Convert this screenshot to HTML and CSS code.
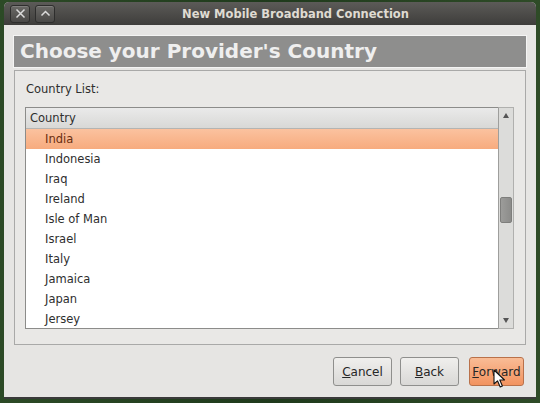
FILE: index.html
```html
<!DOCTYPE html>
<html>
<head>
<meta charset="utf-8">
<link rel="stylesheet" href="styles.css">
</head>
<body>
<div class="window">
  <div class="titlebar">
    <div class="tb-buttons">
      <span class="tb-btn"><svg width="11" height="11" viewBox="0 0 11 11"><path d="M1.5 1.5 L9.5 9.5 M9.5 1.5 L1.5 9.5" stroke="#dcdcdc" stroke-width="1.5" fill="none"/></svg></span>
      <span class="tb-btn"><svg width="11" height="11" viewBox="0 0 11 11"><path d="M1.5 7.5 L5.5 3.5 L9.5 7.5" stroke="#dcdcdc" stroke-width="1.5" fill="none"/></svg></span>
    </div>
    <div class="title">New Mobile Broadband Connection</div>
  </div>
  <div class="content">
    <div class="banner">Choose your Provider's Country</div>
    <div class="panel">
      <div class="label">Country List:</div>
      <div class="listwrap">
        <div class="list">
          <div class="list-head">Country</div>
          <div class="row selected">India</div>
          <div class="row">Indonesia</div>
          <div class="row">Iraq</div>
          <div class="row">Ireland</div>
          <div class="row">Isle of Man</div>
          <div class="row">Israel</div>
          <div class="row">Italy</div>
          <div class="row">Jamaica</div>
          <div class="row">Japan</div>
          <div class="row">Jersey</div>
        </div>
        <div class="scrollbar">
          <span class="arrow up"></span>
          <div class="trough"><div class="thumb"></div></div>
          <span class="arrow down"></span>
        </div>
      </div>
    </div>
    <div class="buttons">
      <button class="btn"><u>C</u>ancel</button>
      <button class="btn"><u>B</u>ack</button>
      <button class="btn primary"><u>F</u>orward</button>
      <svg class="cursor" width="13" height="20" viewBox="0 0 13 20"><path d="M1 1 L1 15 L4.5 11.8 L7.2 18 L9.4 17 L6.8 11 L11.5 11 Z" fill="#fff" stroke="#111" stroke-width="1.1" stroke-linejoin="round"/></svg>
    </div>
  </div>
</div>
</body>
</html>
```
FILE: styles.css
```css
html, body {
  margin: 0;
  padding: 0;
}
body {
  width: 540px;
  height: 403px;
  overflow: hidden;
  background: linear-gradient(90deg, #2c4a26 0%, #1f3a1c 50%, #2e4b27 100%);
  font-family: "DejaVu Sans", sans-serif;
  font-size: 11.5px;
  color: #2e2e2e;
}
.window {
  margin: 2px 0 0 4px;
  width: 532px;
  height: 395px;
  background: #e6e5e3;
  border-radius: 5px 5px 0 0;
  display: flex;
  flex-direction: column;
  border-bottom: 2px solid #3a3a3a;
  overflow: hidden;
}
.titlebar {
  height: 23px;
  flex: none;
  background: linear-gradient(#5c5b58, #3e3d3b);
  display: flex;
  align-items: center;
  position: relative;
}
.tb-buttons {
  display: flex;
  gap: 5px;
  padding-left: 6px;
}
.tb-btn {
  width: 18px;
  height: 16px;
  border: 1px solid #2e2e2d;
  border-radius: 3px;
  background: linear-gradient(#6a6966, #4a4947);
  display: flex;
  align-items: center;
  justify-content: center;
  box-shadow: inset 0 1px 0 rgba(255,255,255,0.15);
}
.title {
  flex: 1;
  text-align: center;
  color: #dfdbd2;
  font-weight: bold;
  font-size: 11.5px;
  padding-left: 0;
}
.content {
  flex: 1;
  display: flex;
  flex-direction: column;
  padding: 10px 9px 0 9px;
}
.banner {
  height: 31px;
  background: #8e8e8d;
  border: 1px solid #f4f4f3;
  color: #efefef;
  font-weight: bold;
  font-size: 20px;
  line-height: 31px;
  padding-left: 6px;
}
.panel {
  margin: 2px 1px 0 1px;
  height: 262px;
  border: 1px solid #a9a9a8;
  background: #e9e8e6;
  padding: 11px 11px 0 10px;
}
.label {
  height: 25px;
  line-height: 14px;
  padding-left: 1px;
}
.listwrap {
  display: flex;
  height: 222px;
}
.list {
  flex: 1;
  border: 1px solid #8c8c8a;
  border-right: none;
  background: #fff;
  overflow: hidden;
}
.list-head {
  height: 20px;
  line-height: 20px;
  padding-left: 4px;
  background: linear-gradient(#eaeaea, #d8d8d6);
  border-bottom: 1px solid #b4b4b2;
}
.row {
  height: 20px;
  line-height: 20px;
  padding-left: 19px;
}
.row.selected {
  background: linear-gradient(#fbc29f, #f7ab7e);
  color: #6a2e10;
}
.scrollbar {
  width: 14px;
  background: #dcdcda;
  border: 1px solid #b0b0ae;
  border-left: 1px solid #9e9e9c;
  display: flex;
  flex-direction: column;
  align-items: center;
}
.arrow {
  width: 0;
  height: 0;
  border-left: 3px solid transparent;
  border-right: 3px solid transparent;
  margin: 5px 0;
}
.arrow.up {
  border-bottom: 5px solid #555;
}
.arrow.down {
  border-top: 5px solid #555;
}
.trough {
  flex: 1;
  width: 100%;
  padding-top: 74px;
}
.thumb {
  height: 26px;
  margin-left: 1px;
  width: 12px;
  background: linear-gradient(90deg, #9c9c9a, #8c8c8a);
  border: 1px solid #7e7e7c;
  border-radius: 2px;
  box-sizing: border-box;
}
.buttons {
  display: flex;
  justify-content: flex-end;
  gap: 8px;
  margin-top: 12px;
  padding-right: 3px;
  position: relative;
}
.btn {
  height: 29px;
  border: 1px solid #8f8f8d;
  border-radius: 3px;
  background: linear-gradient(#f0efed, #d9d8d6);
  font-family: "DejaVu Sans", sans-serif;
  font-size: 12px;
  color: #262626;
  padding: 0;
}
.btn:nth-child(1), .btn:nth-child(2) {
  width: 59px;
}
.btn.primary {
  width: 55px;
  margin-left: 2px;
  background: linear-gradient(#f9bc96, #f2935f);
  border-color: #b9714a;
}
.btn u {
  text-decoration-thickness: 1px;
}
.cursor {
  position: absolute;
  left: 480px;
  top: 12px;
}
```
